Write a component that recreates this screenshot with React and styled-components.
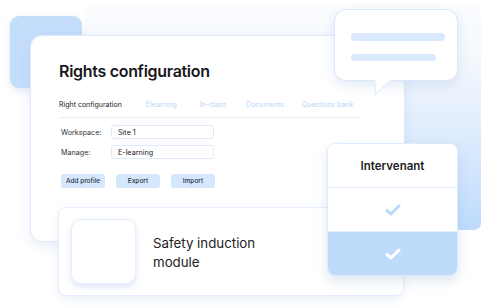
import React from 'react';
import styled, { createGlobalStyle } from 'styled-components';

const GlobalStyle = createGlobalStyle`
  html, body {
    margin: 0;
    padding: 0;
    background: #fff;
  }
  body {
    font-family: Inter, "Noto Sans", sans-serif;
    color: #1d1d1f;
  }
`;

const Stage = styled.div`
  position: relative;
  width: 498px;
  height: 308px;
  overflow: hidden;
  background: #fff;
`;

const Backdrop = styled.div`
  position: absolute;
  left: 85px;
  top: 4px;
  width: 396px;
  height: 226px;
  border-radius: 7px;
  background: linear-gradient(180deg, #fbfcfe 0%, #f4f8fd 25%, #dcebfd 60%, #bddbfc 100%);
`;

const BlueSquare = styled.div`
  position: absolute;
  left: 10px;
  top: 16px;
  width: 72px;
  height: 72px;
  border-radius: 9px;
  background: #c4ddfb;
  box-shadow: 0 3px 8px rgba(140, 170, 210, 0.25);
`;

const MainCard = styled.div`
  position: absolute;
  left: 30px;
  top: 35px;
  width: 375px;
  height: 207px;
  box-sizing: border-box;
  padding: 24px 43px 0 28px;
  background: #fff;
  border: 1px solid #deebfc;
  border-radius: 12px;
  box-shadow: 0 5px 12px rgba(150, 180, 220, 0.22);
  display: flex;
  flex-direction: column;
`;

const Title = styled.h1`
  margin: 0;
  font-size: 16px;
  line-height: 22px;
  font-weight: 600;
  color: #18181b;
  letter-spacing: -0.3px;
`;

const Tabs = styled.div`
  margin-top: 13px;
  display: flex;
  align-items: center;
  height: 18px;
  border-bottom: 1.5px solid #e6f0fd;
  padding-bottom: 4px;
`;

const Tab = styled.span`
  font-size: 7px;
  color: ${p => (p.$active ? '#222' : '#b9d6f8')};
  margin-left: ${p => p.$gap || 0}px;
  white-space: nowrap;
`;

const Form = styled.div`
  margin-top: 7px;
  padding-left: 2px;
  display: flex;
  flex-direction: column;
  gap: 6px;
`;

const Row = styled.div`
  display: flex;
  align-items: center;
`;

const Label = styled.span`
  width: 50px;
  font-size: 7.2px;
  color: #333;
`;

const Field = styled.div`
  width: 103px;
  height: 14px;
  box-sizing: border-box;
  border: 1px solid #deebfc;
  border-radius: 3px;
  padding-left: 6px;
  display: flex;
  align-items: center;
  font-size: 7.2px;
  color: #222;
`;

const Buttons = styled.div`
  margin-top: 15px;
  padding-left: 2px;
  display: flex;
  gap: 11px;
`;

const Button = styled.div`
  width: 44px;
  height: 14px;
  border-radius: 3px;
  background: #d5e7fc;
  display: flex;
  align-items: center;
  justify-content: center;
  font-size: 6.5px;
  font-weight: 500;
  color: #2a3140;
`;

const ModuleCard = styled.div`
  position: absolute;
  left: 58px;
  top: 207px;
  width: 346px;
  height: 89px;
  box-sizing: border-box;
  padding: 11px 12px;
  background: #fff;
  border: 1px solid #e4eefc;
  border-radius: 8px;
  box-shadow: 0 4px 10px rgba(150, 180, 220, 0.18);
  display: flex;
  align-items: center;
  gap: 17px;
`;

const Thumb = styled.div`
  width: 65px;
  height: 65px;
  border-radius: 10px;
  border: 1px solid #e4eefc;
  box-sizing: border-box;
  background: #fff;
  box-shadow: 0 3px 6px rgba(150, 180, 220, 0.3);
`;

const ModuleName = styled.div`
  font-size: 13.3px;
  line-height: 19px;
  color: #222;
  margin-top: 2px;
`;

const Bubble = styled.div`
  position: absolute;
  left: 334px;
  top: 9px;
  width: 124px;
  height: 72px;
  box-sizing: border-box;
  padding: 23px 14px 0 16px;
  background: #fff;
  border: 1px solid #d9e8fc;
  border-radius: 12px;
  box-shadow: 0 5px 12px rgba(150, 180, 220, 0.25);
  display: flex;
  flex-direction: column;
  gap: 13px;
`;

const BubbleLine = styled.div`
  width: ${p => p.$w}px;
  height: 7.5px;
  border-radius: 4px;
  background: #dbe9fc;
`;

const Tail = styled.svg`
  position: absolute;
  left: 39px;
  top: 70px;
  overflow: visible;
`;

const RoleCard = styled.div`
  position: absolute;
  left: 327px;
  top: 143px;
  width: 131px;
  height: 133px;
  box-sizing: border-box;
  border: 1px solid #deebfc;
  border-radius: 8px;
  overflow: hidden;
  background: #fff;
  box-shadow: 0 5px 12px rgba(140, 170, 210, 0.28);
  display: flex;
  flex-direction: column;
`;

const RoleCell = styled.div`
  flex: 1;
  display: flex;
  align-items: center;
  justify-content: center;
  background: ${p => (p.$filled ? '#bedbfc' : '#fff')};
  border-top: ${p => (p.$first ? 'none' : '1.5px solid #e3eefd')};
  font-size: 11.5px;
  font-weight: 600;
  color: #1d1d1f;
`;

const Check = ({ color }) => (
  <svg width="16" height="12" viewBox="0 0 16 12">
    <path d="M2 6.5 L6 10 L14 2" fill="none" stroke={color} strokeWidth="3" strokeLinecap="round" strokeLinejoin="round" />
  </svg>
);

export default function App() {
  return (
    <Stage>
      <GlobalStyle />
      <Backdrop />
      <BlueSquare />
      <MainCard>
        <Title>Rights configuration</Title>
        <Tabs>
          <Tab $active>Right configuration</Tab>
          <Tab $gap={24}>Elearning</Tab>
          <Tab $gap={23}>In-class</Tab>
          <Tab $gap={20}>Documents</Tab>
          <Tab $gap={18}>Questions bank</Tab>
        </Tabs>
        <Form>
          <Row>
            <Label>Workspace:</Label>
            <Field>Site 1</Field>
          </Row>
          <Row>
            <Label>Manage:</Label>
            <Field>E-learning</Field>
          </Row>
        </Form>
        <Buttons>
          <Button>Add profile</Button>
          <Button>Export</Button>
          <Button>Import</Button>
        </Buttons>
      </MainCard>
      <ModuleCard>
        <Thumb />
        <ModuleName>
          Safety induction
          <br />
          module
        </ModuleName>
      </ModuleCard>
      <Bubble>
        <BubbleLine $w={94} />
        <BubbleLine $w={85} />
        <Tail width="18" height="26" viewBox="0 0 18 26">
          <path d="M1 0 L1 15 L17 0" fill="#fff" stroke="#d9e8fc" strokeWidth="1" strokeLinejoin="round" />
          <rect x="1.5" y="-2" width="15" height="2.6" fill="#fff" />
        </Tail>
      </Bubble>
      <RoleCard>
        <RoleCell $first>Intervenant</RoleCell>
        <RoleCell>
          <Check color="#bcd9fb" />
        </RoleCell>
        <RoleCell $filled>
          <Check color="#ffffff" />
        </RoleCell>
      </RoleCard>
    </Stage>
  );
}
